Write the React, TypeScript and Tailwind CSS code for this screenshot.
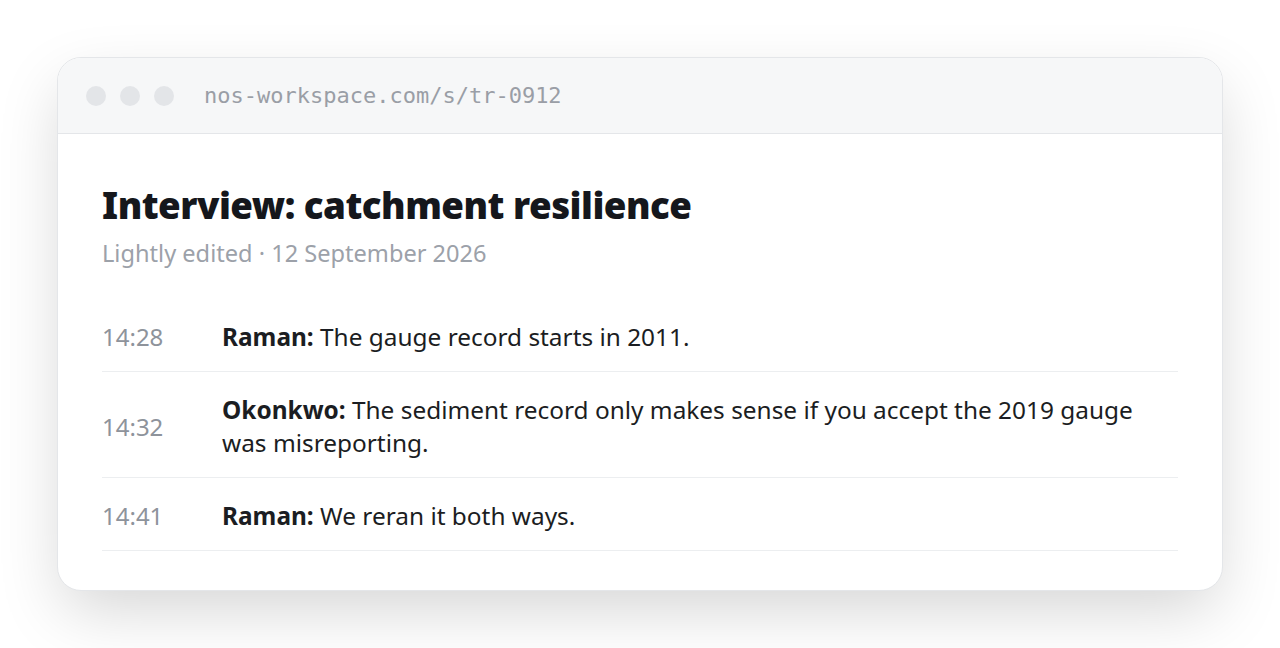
import React from "react";

const rows = [
  { t: "14:28", who: "Raman:", text: "The gauge record starts in 2011." },
  {
    t: "14:32",
    who: "Okonkwo:",
    text: "The sediment record only makes sense if you accept the 2019 gauge was misreporting.",
  },
  { t: "14:41", who: "Raman:", text: "We reran it both ways." },
];

export default function App() {
  return (
    <div className="min-h-[648px] w-full bg-white flex items-start justify-center px-[57px] pt-[57px] pb-[57px] font-['Noto_Sans',sans-serif]">
      <div className="w-full rounded-[24px] border border-[#e4e6e9] bg-white shadow-[0_24px_64px_-6px_rgba(0,0,0,0.17)] overflow-hidden">
        <div className="h-[76px] bg-[#f6f7f8] border-b border-[#e4e6e9] flex items-center px-[28px] gap-[14px]">
          <span className="w-[20px] h-[20px] rounded-full bg-[#e3e5e8]" />
          <span className="w-[20px] h-[20px] rounded-full bg-[#e3e5e8]" />
          <span className="w-[20px] h-[20px] rounded-full bg-[#e3e5e8]" />
          <span className="ml-[16px] text-[22px] text-[#9a9ea6] font-['DejaVu_Sans_Mono',monospace]">
            nos-workspace.com/s/tr-0912
          </span>
        </div>
        <div className="px-[44px] pt-[49px] pb-[39px]">
          <h1 className="text-[36.7px] leading-[44px] font-black text-[#15171c] tracking-[-0.5px]">
            Interview: catchment resilience
          </h1>
          <p className="mt-[10px] text-[23.6px] leading-[33px] text-[#9ca1a9]">
            Lightly edited · 12 September 2026
          </p>
          <div className="mt-[29px]">
            {rows.map((r) => (
              <div
                key={r.t}
                className="flex items-center pt-[21px] pb-[18px] border-b border-[#eceef0]"
              >
                <div className="w-[120px] shrink-0 text-[24px] leading-[33px] text-[#8e939b]">
                  {r.t}
                </div>
                <div className="text-[24.4px] leading-[33px] text-[#1b1d22]">
                  <span className="font-bold">{r.who}</span> {r.text}
                </div>
              </div>
            ))}
          </div>
        </div>
      </div>
    </div>
  );
}
